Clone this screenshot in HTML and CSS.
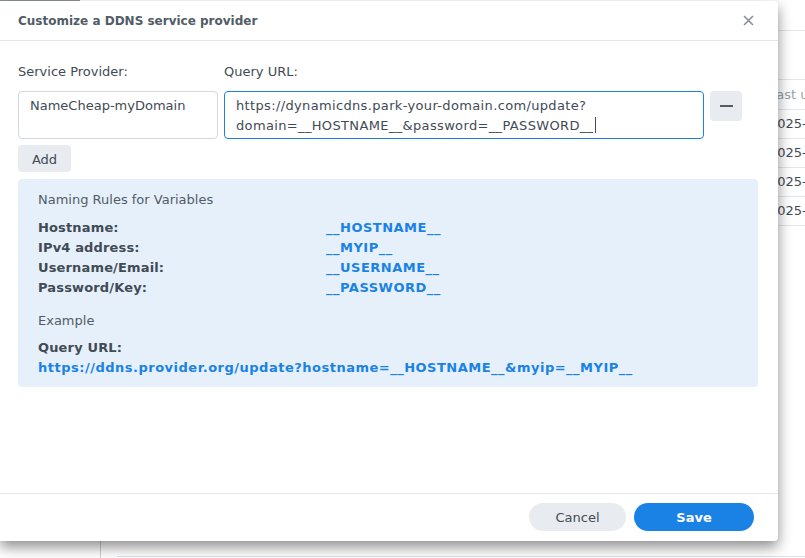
FILE: index.html
```html
<!DOCTYPE html>
<html lang="en">
<head>
    <meta charset="UTF-8">
    <meta name="viewport" content="width=device-width, initial-scale=1.0">
    <title>Customize a DDNS service provider</title>
    <link rel="stylesheet" href="styles.css">
</head>
<body>

<!-- Window behind the dialog -->
<div class="backdrop">
    <div class="tab-line"></div>
    <div class="bg-table">
        <div class="bg-top"></div>
        <div class="bg-head">Last u</div>
        <div class="bg-row">2025-</div>
        <div class="bg-row">2025-</div>
        <div class="bg-row">2025-</div>
        <div class="bg-row">2025-</div>
    </div>
    <div class="bg-bottom"></div>
</div>

<!-- Dialog -->
<div class="dialog">
    <div class="dialog-header">
        <span class="dialog-title">Customize a DDNS service provider</span>
        <svg class="close" width="11" height="11" viewBox="0 0 11 11">
            <path d="M1 1 L10 10 M10 1 L1 10" stroke="#8a9199" stroke-width="1.6" fill="none"/>
        </svg>
    </div>

    <div class="dialog-body">
        <div class="field-row">
            <div class="col-provider">
                <div class="label">Service Provider:</div>
                <div class="input">NameCheap-myDomain</div>
            </div>
            <div class="col-url">
                <div class="label">Query URL:</div>
                <div class="input focused">https://dynamicdns.park-your-domain.com/update?<br>domain=__HOSTNAME__&amp;password=__PASSWORD__<span class="caret"></span></div>
            </div>
            <div class="col-remove">
                <button class="btn-remove" type="button"><span class="minus"></span></button>
            </div>
        </div>

        <button class="btn-add" type="button">Add</button>

        <div class="rules">
            <div class="rules-title">Naming Rules for Variables</div>
            <div class="rules-grid">
                <span class="key">Hostname:</span><span class="var">__HOSTNAME__</span>
                <span class="key">IPv4 address:</span><span class="var">__MYIP__</span>
                <span class="key">Username/Email:</span><span class="var">__USERNAME__</span>
                <span class="key">Password/Key:</span><span class="var">__PASSWORD__</span>
            </div>
            <div class="rules-title example">Example</div>
            <div class="key">Query URL:</div>
            <div class="var">https://ddns.provider.org/update?hostname=__HOSTNAME__&amp;myip=__MYIP__</div>
        </div>
    </div>

    <div class="dialog-footer">
        <button class="btn btn-cancel" type="button">Cancel</button>
        <button class="btn btn-save" type="button">Save</button>
    </div>
</div>

</body>
</html>
```

FILE: styles.css
```css
body {
    margin: 0;
    padding: 0;
    font-family: "DejaVu Sans", Verdana, sans-serif;
    font-size: 13px;
    color: #414b55;
    background-color: #ffffff;
    width: 805px;
    height: 558px;
    overflow: hidden;
    position: relative;
}
/* background window */
.backdrop {
    height: 558px;
    position: relative;
}
.tab-line {
    width: 80px;
    height: 1px;
    background-color: #8a9199;
}
.bg-table {
    margin-left: 769px;
    width: 36px;
    overflow: hidden;
    color: #707a84;
}
.bg-top {
    height: 29px;
    border-bottom: 1px solid #e3e7ec;
}
.bg-head {
    margin-top: 48px;
    height: 29px;
    line-height: 29px;
    border-top: 1px solid #e3e7ec;
    border-bottom: 1px solid #e3e7ec;
    color: #98a0a8;
    white-space: nowrap;
}
.bg-row {
    height: 28px;
    line-height: 28px;
    border-bottom: 1px solid #e3e7ec;
    color: #414b55;
    white-space: nowrap;
}
.bg-bottom {
    position: absolute;
    left: 100px;
    bottom: 0;
    width: 705px;
    height: 17px;
    border-left: 1px solid #c9d0d8;
}
.bg-bottom::after {
    content: "";
    position: absolute;
    left: 16px;
    right: 0;
    bottom: 1px;
    border-bottom: 1px solid #dbe1e8;
}
/* dialog */
.dialog {
    position: absolute;
    left: 0;
    top: 1px;
    width: 778px;
    height: 540px;
    background-color: #ffffff;
    border-radius: 0 4px 4px 0;
    box-shadow: 0 6px 14px rgba(0, 0, 0, 0.45);
    display: flex;
    flex-direction: column;
}
.dialog-header {
    height: 39px;
    border-bottom: 1px solid #e3e7ec;
    display: flex;
    align-items: center;
    justify-content: space-between;
    padding: 0 24px 0 18px;
}
.dialog-title {
    font-weight: bold;
    font-size: 12px;
    color: #525c66;
}
.close {
    display: block;
}
.dialog-body {
    flex: 1;
    padding: 22px 20px 0 18px;
}
.field-row {
    display: flex;
    gap: 6px;
}
.label {
    height: 20px;
    line-height: 18px;
    margin-bottom: 8px;
}
.col-provider {
    width: 200px;
}
.col-url {
    width: 480px;
}
.col-remove {
    padding-top: 28px;
}
.input {
    height: 48px;
    box-sizing: border-box;
    border: 1px solid #d3d9e0;
    border-radius: 4px;
    padding: 4px 11px;
    line-height: 20px;
    white-space: nowrap;
}
.focused {
    border-color: #1a82e5;
    letter-spacing: 0.35px;
}
.caret {
    display: inline-block;
    width: 1px;
    height: 16px;
    margin-left: 2px;
    background-color: #414b55;
    vertical-align: -3px;
}
.btn-remove {
    width: 32px;
    height: 30px;
    border: none;
    border-radius: 4px;
    background-color: #e8ecf0;
    display: flex;
    align-items: center;
    justify-content: center;
    padding: 0;
}
.minus {
    width: 13px;
    height: 2px;
    background-color: #525c66;
}
.btn-add {
    margin-top: 6px;
    height: 27px;
    width: 53px;
    border: none;
    border-radius: 4px;
    background-color: #e8ecf0;
    font-family: "DejaVu Sans", Verdana, sans-serif;
    font-size: 13px;
    color: #414b55;
    padding: 2px 0 0 0;
}
.rules {
    margin-top: 7px;
    background-color: #e6f0fb;
    border-radius: 4px;
    padding: 11px 20px 10px 20px;
    height: 208px;
    box-sizing: border-box;
}
.rules-title {
    height: 20px;
    line-height: 20px;
    color: #525c66;
    margin-bottom: 8px;
}
.rules-title.example {
    margin-top: 13px;
    margin-bottom: 7px;
}
.rules-grid {
    display: grid;
    grid-template-columns: 288px auto;
    line-height: 20px;
}
.key {
    font-weight: bold;
    color: #414b55;
    line-height: 20px;
    letter-spacing: 0.15px;
}
.var {
    font-weight: bold;
    color: #1a82e5;
    line-height: 20px;
    letter-spacing: 0.5px;
}
.dialog-footer {
    height: 48px;
    box-sizing: border-box;
    border-top: 1px solid #e3e7ec;
    display: flex;
    justify-content: flex-end;
    align-items: flex-start;
    gap: 8px;
    padding: 9px 24px 0 0;
}
.btn {
    height: 28px;
    border: none;
    border-radius: 14px;
    font-family: "DejaVu Sans", Verdana, sans-serif;
    font-size: 13px;
    padding: 0;
}
.btn-cancel {
    width: 97px;
    background-color: #e8ecf0;
    color: #414b55;
}
.btn-save {
    width: 120px;
    background-color: #1a82e5;
    color: #ffffff;
    font-weight: bold;
}
```
